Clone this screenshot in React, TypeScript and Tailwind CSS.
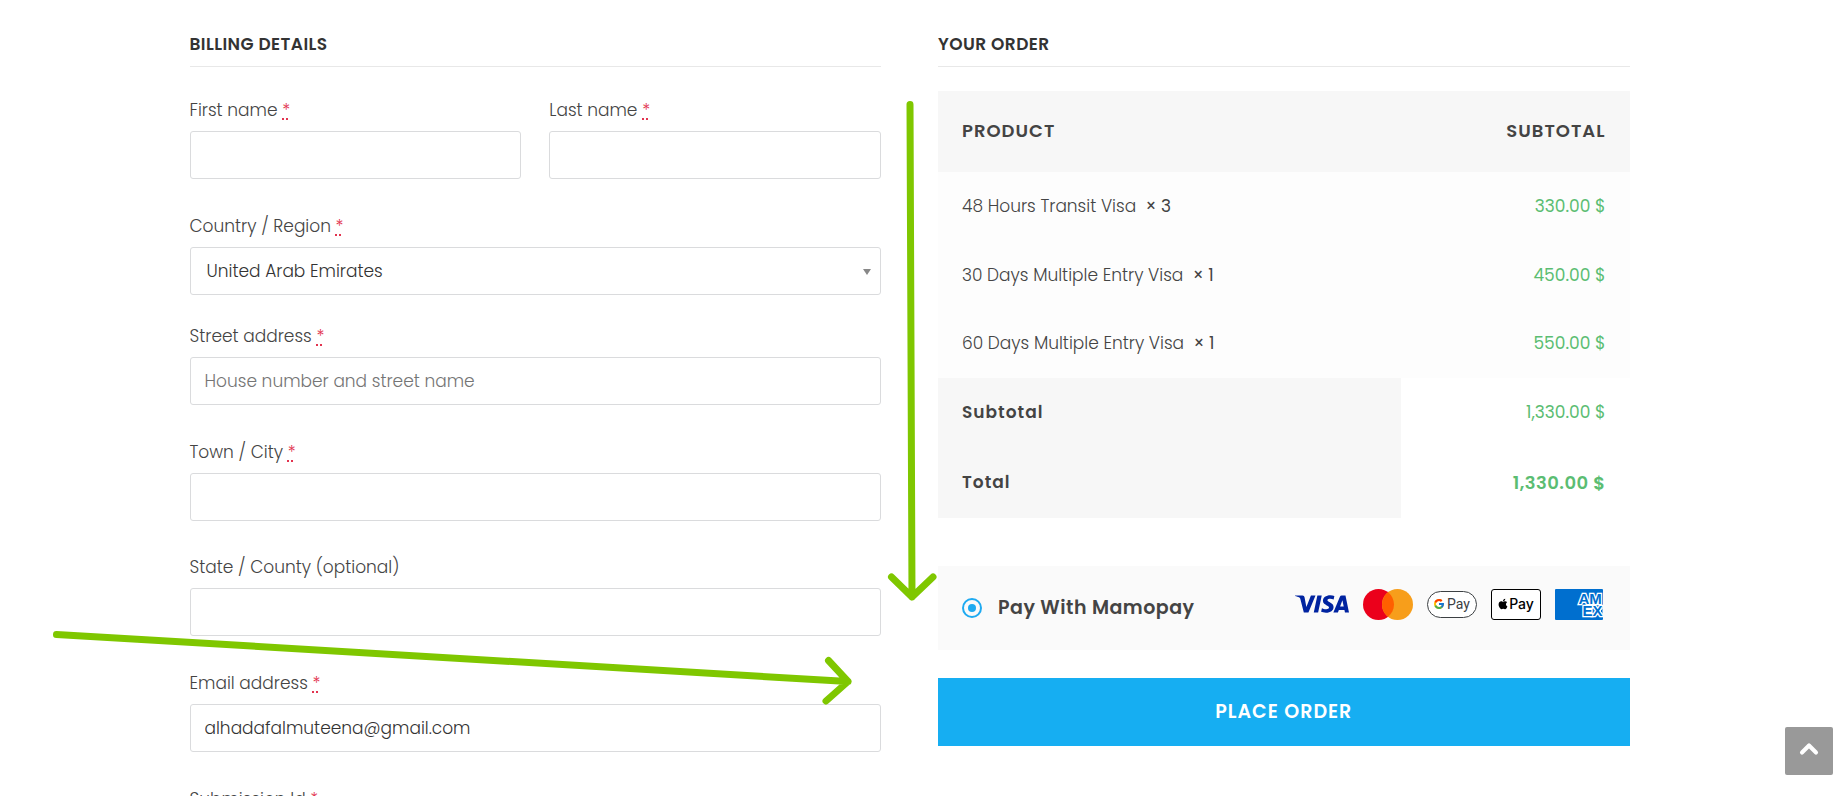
import React, { useState } from 'react';
import { ChevronUp } from 'lucide-react';
import { FaApple } from 'react-icons/fa';
import { FcGoogle } from 'react-icons/fc';
import { SiVisa } from 'react-icons/si';

interface FieldProps {
  id: string;
  label: string;
  required?: boolean;
  className?: string;
  children: React.ReactNode;
}

const inputClass =
  'block h-12 w-full rounded-[3px] border border-[#dadbdd] bg-white px-3.5 text-[17px] text-[#333] outline-none placeholder:text-[#757575] focus:border-[#16aef2]';

const items = [
  { name: '48 Hours Transit Visa', qty: 3, price: '330.00 $' },
  { name: '30 Days Multiple Entry Visa', qty: 1, price: '450.00 $' },
  { name: '60 Days Multiple Entry Visa', qty: 1, price: '550.00 $' },
];

function Field({ id, label, required, className = '', children }: FieldProps) {
  return (
    <div className={className}>
      <label htmlFor={id} className="mb-1.5 block leading-[30px]">
        {label}{' '}
        {required && (
          <abbr title="required" className="text-[#e2334f] underline decoration-dotted decoration-2 underline-offset-2">
            *
          </abbr>
        )}
      </label>
      {children}
    </div>
  );
}

function SectionTitle({ children }: { children: React.ReactNode }) {
  return (
    <h2 className="border-b border-[#e8e8e8] pb-2 text-[17px] leading-7 font-semibold tracking-wide text-[#333] uppercase">
      {children}
    </h2>
  );
}

function PaymentLogos() {
  return (
    <div className="mb-2 flex items-center gap-3.5">
      <SiVisa className="size-[54px] text-[#0023a0]" title="Visa" />

      <svg className="h-[31px] w-[50px]" viewBox="0 0 50 31" role="img" aria-label="Mastercard">
        <circle cx="15.5" cy="15.5" r="15.5" fill="#eb001b" />
        <circle cx="34.5" cy="15.5" r="15.5" fill="#f79e1b" />
        <path d="M25 3.25a15.5 15.5 0 0 1 0 24.5a15.5 15.5 0 0 1 0-24.5z" fill="#ff5f00" />
      </svg>

      <div className="flex h-[27px] w-[50px] items-center justify-center gap-0.5 rounded-full border border-[#3c4043] bg-white font-['Roboto',sans-serif] text-sm text-[#3c4043]">
        <FcGoogle className="size-3" />
        Pay
      </div>

      <div className="flex h-[31px] w-[50px] items-center justify-center rounded-[3px] border border-black bg-white font-['Inter',sans-serif] text-sm font-medium text-black">
        <FaApple className="size-3" />
        Pay
      </div>

      <svg className="h-[31px] w-12" viewBox="0 0 48 31" role="img" aria-label="American Express">
        <rect width="48" height="31" rx="1" fill="#006fcf" />
        <g
          fill="#006fcf"
          stroke="#fff"
          strokeWidth="2.6"
          paintOrder="stroke"
          fontFamily="Liberation Sans, sans-serif"
          fontWeight="700"
          fontSize="15"
        >
          <text x="23.5" y="15">AM</text>
          <text x="27.5" y="26.5">EX</text>
        </g>
        <path d="M48 18.500l-3 3.500l3 3.500z" fill="#006fcf" stroke="#fff" />
      </svg>
    </div>
  );
}

// Hand-drawn style pointers laid over the form
function Arrows() {
  return (
    <svg
      className="pointer-events-none absolute top-0 left-0"
      width="960"
      height="796"
      viewBox="0 0 960 796"
      fill="none"
      stroke="#7fc700"
      strokeWidth="7"
      strokeLinecap="round"
      strokeLinejoin="round"
      aria-hidden="true"
    >
      <path d="M910 104.500L912 597M891.500 577L912 597L933 577" />
      <path d="M56.500 634.500L848 681.500M828.500 660.500L848 681.500L826 701" />
    </svg>
  );
}

export default function App() {
  const [country, setCountry] = useState('United Arab Emirates');
  const [email, setEmail] = useState('alhadafalmuteena@gmail.com');

  return (
    <div className="relative h-screen overflow-hidden bg-white pr-6 font-['Poppins','Inter',sans-serif] text-[17px] text-[#444]">
      <form className="mx-auto grid max-w-[1440px] grid-cols-2 gap-[57px] pt-[30px]" onSubmit={(e) => e.preventDefault()}>
        <section>
          <SectionTitle>Billing details</SectionTitle>

          <div className="mt-7 flex flex-col gap-8 font-light">
            <div className="grid grid-cols-2 gap-7">
              <Field id="first-name" label="First name" required>
                <input id="first-name" type="text" className={inputClass} />
              </Field>
              <Field id="last-name" label="Last name" required>
                <input id="last-name" type="text" className={inputClass} />
              </Field>
            </div>

            <Field id="country" label="Country / Region" required className="-mb-1.5">
              <div className="relative">
                <select
                  id="country"
                  value={country}
                  onChange={(e) => setCountry(e.target.value)}
                  className="block h-12 w-full appearance-none rounded-[3px] border border-[#dadbdd] bg-white px-4 pt-0.5 text-[17px] text-[#333] outline-none"
                >
                  <option>United Arab Emirates</option>
                </select>
                <svg className="pointer-events-none absolute top-[22px] right-2.5 h-1.5 w-2" viewBox="0 0 8 6" fill="#888">
                  <path d="M0 0h8L4 6z" />
                </svg>
              </div>
            </Field>

            <Field id="street" label="Street address" required>
              <input id="street" type="text" placeholder="House number and street name" className={inputClass} />
            </Field>

            <Field id="city" label="Town / City" required className="-mb-px">
              <input id="city" type="text" className={inputClass} />
            </Field>

            <Field id="state" label="State / County (optional)">
              <input id="state" type="text" className={inputClass} />
            </Field>

            <Field id="email" label="Email address" required>
              <input
                id="email"
                type="email"
                value={email}
                onChange={(e) => setEmail(e.target.value)}
                className={inputClass}
              />
            </Field>

            <Field id="submission-id" label="Submission Id" required>
              <input id="submission-id" type="text" className={inputClass} />
            </Field>
          </div>
        </section>

        <section>
          <SectionTitle>Your order</SectionTitle>

          <table className="mt-6 w-full table-fixed">
            <thead className="bg-[#f7f7f7] text-lg tracking-[1px] uppercase">
              <tr className="h-[81px]">
                <th className="w-[67%] px-6 pb-0.5 text-left font-semibold">Product</th>
                <th className="px-6 pb-0.5 text-right font-semibold">Subtotal</th>
              </tr>
            </thead>
            <tbody className="bg-[#fdfdfd] font-light">
              {items.map((item) => (
                <tr key={item.name} className="h-[69px] last:h-[68px]">
                  <td className="px-6">
                    {item.name}&nbsp; <span className="font-normal">× {item.qty}</span>
                  </td>
                  <td className="px-6 text-right font-normal text-[#5bbd72]">{item.price}</td>
                </tr>
              ))}
            </tbody>
            <tfoot>
              <tr className="h-[70px]">
                <th className="bg-[#f7f7f7] px-6 text-left font-semibold tracking-[1px]">Subtotal</th>
                <td className="px-6 text-right text-[#5bbd72]">1,330.00 $</td>
              </tr>
              <tr className="h-[70px]">
                <th className="bg-[#f7f7f7] px-6 text-left font-semibold tracking-[1px]">Total</th>
                <td className="px-6 text-right text-lg font-semibold tracking-wide text-[#5bbd72]">1,330.00 $</td>
              </tr>
            </tfoot>
          </table>

          <div className="mt-12 flex h-[84px] items-center justify-between bg-[#fafafa] pr-[27px] pl-6">
            <label className="flex items-center gap-4 text-[19px] font-semibold tracking-wide">
              <input
                type="radio"
                name="payment"
                defaultChecked
                className="size-5 appearance-none rounded-full border-2 border-[#1eaaf1] bg-clip-content p-1 checked:bg-[#1eaaf1]"
              />
              Pay With Mamopay
            </label>
            <PaymentLogos />
          </div>

          <button
            type="submit"
            className="mt-7 h-[68px] w-full bg-[#16aef2] text-[19px] font-semibold tracking-[1px] text-white uppercase"
          >
            Place order
          </button>
        </section>
      </form>

      <Arrows />

      <button
        type="button"
        aria-label="Back to top"
        className="fixed right-2.5 bottom-[21px] flex size-12 items-center justify-center rounded-[2px] bg-[#999] pb-1 text-white"
      >
        <ChevronUp className="size-7" strokeWidth={3.5} />
      </button>
    </div>
  );
}
